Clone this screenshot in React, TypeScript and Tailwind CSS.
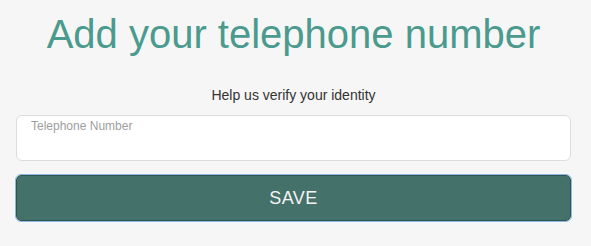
export default function App() {
  return (
    <div className="min-h-[246px] bg-[#f6f6f6] pl-4 pr-5 pt-[7px] font-['Liberation_Sans',Arial,sans-serif]">
      <h1 className="text-center text-[40px] leading-[54px] text-[#4a9a8e]">
        Add your telephone number
      </h1>

      <p className="mt-[24px] text-center text-[14px] leading-[20px] text-[#333]">
        Help us verify your identity
      </p>

      {/* Telephone */}
      <label className="mt-[10px] block h-[46px] rounded-[6px] border border-[#dcdcdc] bg-white px-[14px] pt-[3px]">
        <span className="block text-[12px] leading-[14px] text-[#9e9e9e]">Telephone Number</span>
        <input className="w-full bg-transparent text-[14px] outline-none" />
      </label>

      <button
        type="button"
        className="mt-[14px] flex h-[46px] w-full items-center justify-center rounded-[5px] border border-[#2f5550] bg-[#44716a] text-[18px] tracking-[0.5px] text-[#f4f4f4] outline outline-1 outline-[#8fb6e6]"
      >
        SAVE
      </button>
    </div>
  );
}
